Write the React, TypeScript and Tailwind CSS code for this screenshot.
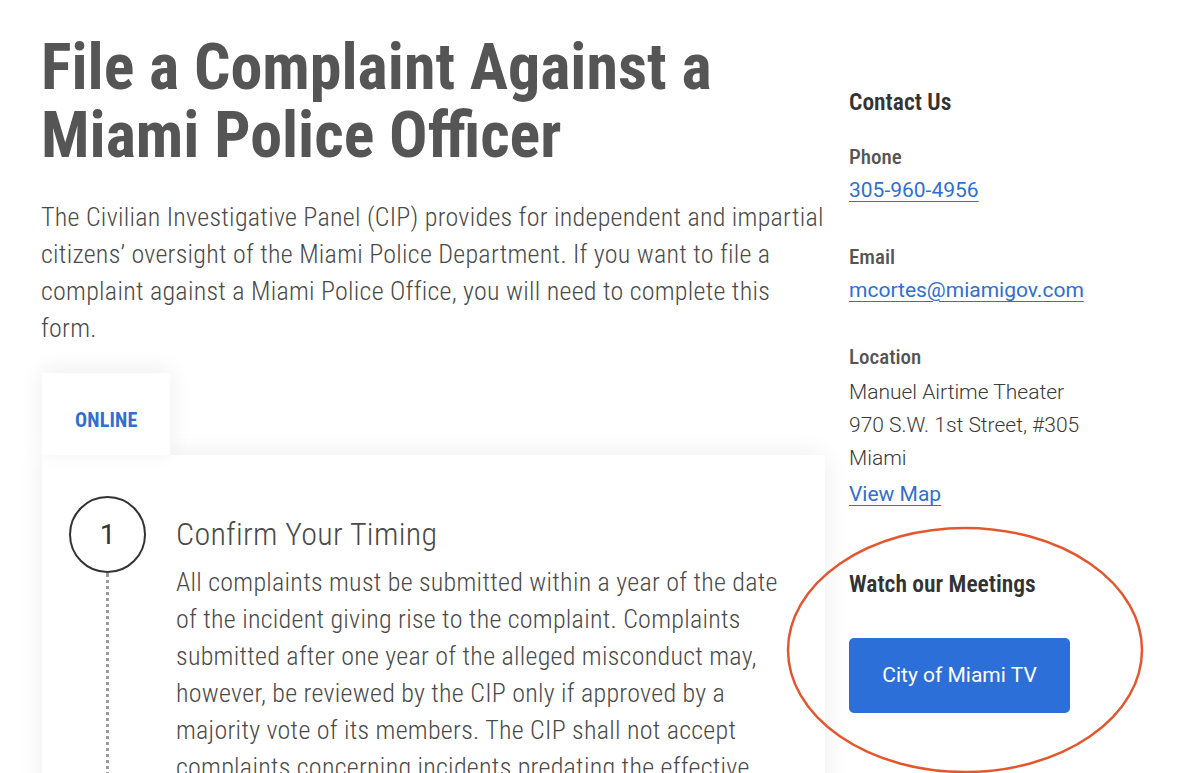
import React from "react";

export default function App() {
  return (
    <div className="relative h-[773px] w-[1200px] overflow-hidden bg-white font-['Roboto',sans-serif]">
      <div className="flex items-start pl-[41px]">
        {/* Main column */}
        <div className="w-[785px] shrink-0">
          <h1 className="mt-[34px] text-[64px] leading-[68px] font-bold font-stretch-condensed text-[#555555]">
            File a Complaint Against a<br />Miami Police Officer
          </h1>
          <p className="mt-[29px] w-[785px] text-[26px] leading-[37px] font-light font-stretch-condensed tracking-[0.27px] text-[#4a4a4a]">
            The Civilian Investigative Panel (CIP) provides for independent and impartial citizens’ oversight of the Miami Police Department. If you want to file a complaint against a Miami Police Office, you will need to complete this form.
          </p>

          {/* Tabs */}
          <div className="mt-[26px] ml-px">
            <div className="relative z-10 flex h-[82px] w-[128px] items-center bg-white pl-[33px] pt-[12px] shadow-[0_-4px_22px_rgba(0,0,0,0.07)]">
              <span className="text-[20px] font-bold font-stretch-condensed tracking-[0.2px] text-[#2f6fcf]">ONLINE</span>
            </div>
            <div className="relative h-[420px] w-[783px] bg-white pl-[27px] pt-[41px] shadow-[0_0_24px_rgba(0,0,0,0.08)]">
              <div className="flex gap-[30px]">
                <div className="flex w-[77px] shrink-0 flex-col items-center">
                  <div className="flex h-[77px] w-[77px] items-center justify-center rounded-full border-2 border-[#333333] text-[28px] font-normal text-[#333333]">
                    1
                  </div>
                  <div className="h-[300px] border-l-[3px] border-dotted border-[#9a9a9a]"></div>
                </div>
                <div className="w-[612px]">
                  <h2 className="mt-[18px] text-[32px] leading-[40px] font-light font-stretch-condensed tracking-[0.3px] text-[#4a4a4a]">
                    Confirm Your Timing
                  </h2>
                  <p className="mt-[10px] text-[26px] leading-[37px] font-light font-stretch-condensed tracking-[0.27px] text-[#4a4a4a]">
                    All complaints must be submitted within a year of the date of the incident giving rise to the complaint. Complaints submitted after one year of the alleged misconduct may, however, be reviewed by the CIP only if approved by a majority vote of its members. The CIP shall not accept complaints concerning incidents predating the effective date of this ordinance.
                  </p>
                </div>
              </div>
            </div>
          </div>
        </div>

        {/* Sidebar */}
        <aside className="ml-[23px] w-[300px] pt-[86px] text-[#444444]">
          <h3 className="text-[23.5px] leading-[33px] font-semibold font-stretch-condensed text-[#333333]">Contact Us</h3>

          <div className="mt-[22px] text-[21px] leading-[33px] font-medium font-stretch-condensed text-[#555555]">Phone</div>
          <a href="#" className="block text-[21px] leading-[33px] text-[#2f6fcf] underline decoration-1 underline-offset-[4px]">305-960-4956</a>

          <div className="mt-[34px] text-[21px] leading-[33px] font-medium font-stretch-condensed text-[#555555]">Email</div>
          <a href="#" className="block text-[21px] leading-[33px] text-[#2f6fcf] underline decoration-1 underline-offset-[4px]">mcortes@miamigov.com</a>

          <div className="mt-[34px] text-[21px] leading-[33px] font-medium font-stretch-condensed text-[#555555]">Location</div>
          <div className="mt-[2px] text-[21px] leading-[33px] font-light text-[#3a3a3a]">
            <div>Manuel Airtime Theater</div>
            <div>970 S.W. 1st Street, #305</div>
            <div>Miami</div>
          </div>
          <a href="#" className="mt-[3px] block text-[21px] leading-[33px] text-[#2f6fcf] underline decoration-1 underline-offset-[4px]">View Map</a>

          <h3 className="mt-[57px] text-[23.5px] leading-[33px] font-semibold font-stretch-condensed text-[#333333]">Watch our Meetings</h3>
          <button className="mt-[37px] flex h-[75px] w-[221px] items-center justify-center rounded-[5px] bg-[#2d6fd8] text-[21px] text-white">
            City of Miami TV
          </button>
        </aside>
      </div>

      {/* Annotation ellipse */}
      <svg className="pointer-events-none absolute left-0 top-0" width="1200" height="773" viewBox="0 0 1200 773">
        <ellipse cx="965" cy="650" rx="177" ry="122" fill="none" stroke="#e4572e" strokeWidth="2.5" />
      </svg>
    </div>
  );
}
